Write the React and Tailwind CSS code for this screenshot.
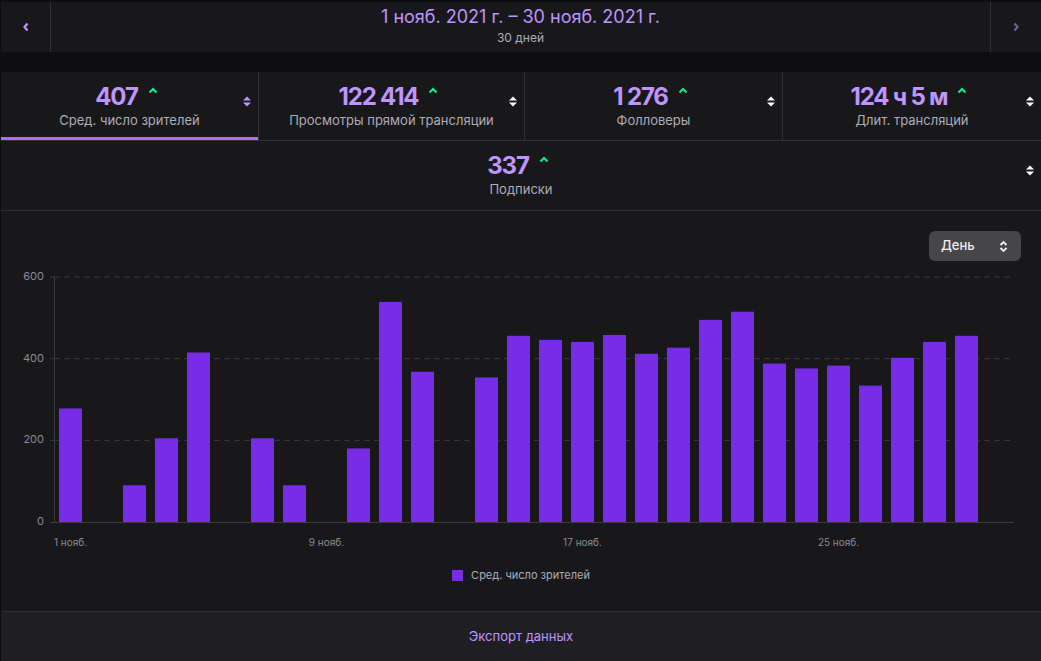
import React from 'react';

const bars = [278, 0, 90, 205, 415, 0, 205, 90, 0, 180, 539, 368, 0, 354, 456, 446, 441, 458, 412, 427, 495, 515, 388, 376, 383, 334, 402, 441, 456, 0];

const stats = [
  { value: '407', label: 'Сред. число зрителей', active: true },
  { value: '122 414', label: 'Просмотры прямой трансляции' },
  { value: '1 276', label: 'Фолловеры' },
  { value: '124 ч 5 м', label: 'Длит. трансляций' },
];

function SortIcon({ active }) {
  return (
    <svg width="10" height="13" viewBox="0 0 10 13" className={active ? 'text-[#bf94ff]' : 'text-white'}>
      <path d="M1 5.5 L5 1.5 L9 5.5 Z" fill="currentColor" />
      <path d="M1 7.5 L5 11.5 L9 7.5 Z" fill="currentColor" />
    </svg>
  );
}

function UpCaret() {
  return (
    <svg width="10" height="7" viewBox="0 0 10 7" className="text-[#00f593]">
      <path d="M1.5 5.5 L5 2 L8.5 5.5" fill="none" stroke="currentColor" strokeWidth="2" />
    </svg>
  );
}

function Stat({ value, label, active, className = '' }) {
  return (
    <div className={`relative flex flex-col items-center ${className}`}>
      <div className="flex items-start gap-[10px] pt-[11px] -ml-[6px]">
        <span className="text-[24px] leading-[28px] font-bold tracking-[-0.05em] text-[#bf94ff]">{value}</span>
        <span className="mt-[4px]"><UpCaret /></span>
      </div>
      <div className="text-[13px] leading-[18px] text-[#adadb8]">{label}</div>
      <div className="absolute right-[6px] top-[23px]"><SortIcon active={active} /></div>
      {active && <div className="absolute left-0 right-0 bottom-0 h-[3px] bg-[#a970ff]" />}
    </div>
  );
}

function Chart() {
  const Y = v => 261 - v * (245 / 600);
  const grid = [600, 400, 200];
  const xLabels = [[0, '1 нояб.'], [8, '9 нояб.'], [16, '17 нояб.'], [24, '25 нояб.']];
  return (
    <svg width="1040" height="294" viewBox="1 0 1040 294" className="block" style={{ fontFamily: 'Inter, sans-serif' }}>
      {grid.map(g => (
        <g key={g}>
          <line x1="50" x2="54" y1={Y(g)} y2={Y(g)} stroke="#3a3a3d" />
          <line x1="54" x2="1010" y1={Y(g)} y2={Y(g)} stroke="#3a3a3d" strokeDasharray="6 4" />
          <text x="44" y={Y(g)} textAnchor="end" dominantBaseline="middle" fontSize="11" fill="#8a8a93">{g}</text>
        </g>
      ))}
      <text x="44" y={Y(0)} textAnchor="end" dominantBaseline="middle" fontSize="11" fill="#8a8a93">0</text>
      <line x1="54.5" x2="54.5" y1={Y(600)} y2={Y(0)} stroke="#3a3a3d" />
      {bars.map((v, i) =>
        v > 0 ? <rect key={i} x={59 + 32 * i} y={Y(v)} width="23" height={261 - Y(v)} fill="#772ce8" /> : null
      )}
      <line x1="50" x2="1014" y1="261.5" y2="261.5" stroke="#3a3a3d" />
      {xLabels.map(([i, t]) => (
        <text key={t} x={70.5 + 32 * i} y="282" textAnchor="middle" dominantBaseline="middle" fontSize="10" fill="#8a8a93">{t}</text>
      ))}
    </svg>
  );
}

export default function App() {
  return (
    <div className="w-[1041px] h-[661px] bg-[#0e0e10] overflow-hidden pt-[2px] pl-px" style={{ fontFamily: 'Inter, "Noto Sans", sans-serif' }}>
      {/* date range bar */}
      <div className="h-[50px] flex bg-[#18181b]">
        <div className="w-[50px] flex items-center justify-center border-r border-[#2f2f35]">
          <svg width="8" height="10" viewBox="0 0 8 10" className="text-[#bf94ff]">
            <path d="M5.5 1.5 L2.5 5 L5.5 8.5" fill="none" stroke="currentColor" strokeWidth="2.2" />
          </svg>
        </div>
        <div className="flex-1 flex flex-col items-center pt-[4px]">
          <div className="text-[18px] leading-[22px] text-[#bf94ff]">1 нояб. 2021 г. – 30 нояб. 2021 г.</div>
          <div className="text-[12px] leading-[16px] mt-[2px] text-[#adadb8]">30 дней</div>
        </div>
        <div className="w-[51px] flex items-center justify-center border-l border-[#2f2f35]">
          <svg width="8" height="10" viewBox="0 0 8 10" className="text-[#6f5c99]">
            <path d="M2.5 1.5 L5.5 5 L2.5 8.5" fill="none" stroke="currentColor" strokeWidth="2.2" />
          </svg>
        </div>
      </div>

      <div className="h-[20px]" />

      {/* stats */}
      <div className="bg-[#18181b]">
        <div className="h-[69px] grid grid-cols-[257px_266px_258px_1fr] border-b border-[#2f2f35]">
          {stats.map((s, i) => (
            <Stat key={s.label} {...s} className={i > 0 ? 'border-l border-[#2f2f35]' : ''} />
          ))}
        </div>
        <div className="h-[70px] border-b border-[#2f2f35]">
          <Stat value="337" label="Подписки" className="h-full" />
        </div>

        {/* chart */}
        <div className="h-[400px] flex flex-col">
          <div className="flex justify-end pt-[20px] pr-[20px]">
            <div className="w-[92px] h-[30px] rounded-[6px] bg-[#464649] flex items-center justify-between pl-[12px] pr-[13px]">
              <span className="text-[13px] font-medium text-[#efeff1]">День</span>
              <svg width="9" height="13" viewBox="0 0 9 13" className="text-[#efeff1]">
                <path d="M1.5 5 L4.5 2 L7.5 5" fill="none" stroke="currentColor" strokeWidth="1.8" />
                <path d="M1.5 8 L4.5 11 L7.5 8" fill="none" stroke="currentColor" strokeWidth="1.8" />
              </svg>
            </div>
          </div>
          <Chart />
          <div className="flex items-center justify-center gap-[8px] mt-[8px]">
            <span className="w-[11px] h-[11px] bg-[#772ce8]" />
            <span className="text-[11px] leading-[24px] text-[#adadb8]">Сред. число зрителей</span>
          </div>
        </div>

        {/* footer */}
        <div className="h-[50px] bg-[#1f1f23] border-t border-[#2f2f35] flex items-center justify-center">
          <span className="text-[13px] text-[#bf94ff]">Экспорт данных</span>
        </div>
      </div>
    </div>
  );
}
